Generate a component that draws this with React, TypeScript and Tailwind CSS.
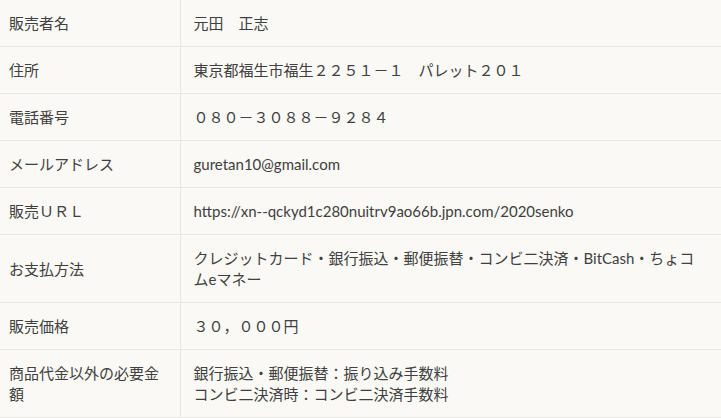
const rows: { label: string; value: string[] }[] = [
  { label: '販売者名', value: ['元田　正志'] },
  { label: '住所', value: ['東京都福生市福生２２５１－１　パレット２０１'] },
  { label: '電話番号', value: ['０８０－３０８８－９２８４'] },
  { label: 'メールアドレス', value: ['guretan10@gmail.com'] },
  { label: '販売ＵＲＬ', value: ['https://xn--qckyd1c280nuitrv9ao66b.jpn.com/2020senko'] },
  {
    label: 'お支払方法',
    value: ['クレジットカード・銀行振込・郵便振替・コンビ二決済・BitCash・ちょコムeマネー'],
  },
  { label: '販売価格', value: ['３０，０００円'] },
  {
    label: '商品代金以外の必要金額',
    value: ['銀行振込・郵便振替：振り込み手数料', 'コンビ二決済時：コンビ二決済手数料'],
  },
];

export default function App() {
  return (
    <div
      className="w-[721px] h-[418px] overflow-hidden bg-[#faf9f6] text-[15px] leading-[21px] text-[#404040]"
      style={{ fontFamily: 'Lato, "Noto Sans CJK JP", sans-serif' }}
    >
      <table className="w-[721px] border-collapse table-fixed">
        <colgroup>
          <col className="w-[180px]" />
          <col />
        </colgroup>
        <tbody>
          {rows.map((row) => (
            <tr key={row.label} className="border-b border-[#e9e7e3]">
              <th className="border-r border-[#e9e7e3] pl-[9px] pr-[13px] pt-[13px] pb-[12px] text-left font-normal align-middle">
                {row.label}
              </th>
              <td className="pl-[13px] pr-[25px] pt-[13px] pb-[12px] align-middle">
                {row.value.map((line) => (
                  <div key={line}>{line}</div>
                ))}
              </td>
            </tr>
          ))}
        </tbody>
      </table>
    </div>
  );
}
